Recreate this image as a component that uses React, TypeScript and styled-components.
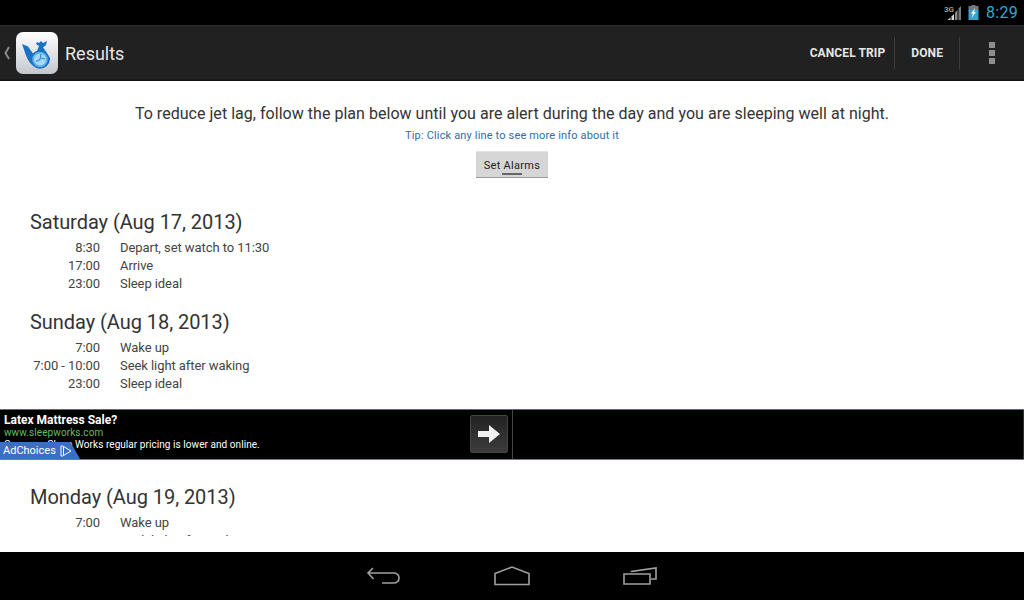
import React from "react";
import styled, { createGlobalStyle } from "styled-components";

const schedule = [
  {
    title: "Saturday (Aug 17, 2013)",
    rows: [
      ["8:30", "Depart, set watch to 11:30"],
      ["17:00", "Arrive"],
      ["23:00", "Sleep ideal"],
    ],
  },
  {
    title: "Sunday (Aug 18, 2013)",
    rows: [
      ["7:00", "Wake up"],
      ["7:00 - 10:00", "Seek light after waking"],
      ["23:00", "Sleep ideal"],
    ],
  },
];

const monday = [
  ["7:00", "Wake up"],
  ["7:00 - 10:00", "Seek light after waking"],
];

export default function App() {
  return (
    <>
      <GlobalStyle />
      <Screen>
        <StatusBar>
          <svg width="18" height="16" viewBox="0 0 18 16">
            <text x="0" y="7" fontSize="8" fontWeight="700" fill="#9a9a9a" fontFamily="Roboto, sans-serif">
              3G
            </text>
            <path d="M17 1v14h-2.500V3.500z" fill="#777" />
            <path d="M13.500 5v10H11V7.500z" fill="#8a8a8a" />
            <path d="M10 9v6H7.500v-3.500z" fill="#d8d8d8" />
            <path d="M6.500 12.500V15H3.500z" fill="#d8d8d8" />
          </svg>
          <svg width="11" height="15" viewBox="0 0 11 15">
            <rect x="3.500" y="0" width="4" height="2" fill="#777" />
            <rect x="0.500" y="1" width="10" height="5" fill="#777" />
            <rect x="0.500" y="5" width="10" height="10" fill="#33a5d5" />
            <path d="M7 3L3 8.500h2L3.500 13 8 7h-2z" fill="#fff" />
          </svg>
          <Clock>8:29</Clock>
        </StatusBar>

        <ActionBar>
          <UpCaret viewBox="0 0 6 14" width="6" height="14">
            <path d="M5 1L1.500 7 5 13" fill="none" stroke="#8a8a8a" strokeWidth="2" />
          </UpCaret>
          <AppIcon>
            <svg width="34" height="34" viewBox="0 0 34 34">
              <path
                d="M2 8l6 2.500 5 7 4-2.500 2-5-3-2 1-2 2 1 2-2 2 2 4-2-1 4-3 2.500 3 4 4 6.500c0 6-4 10-9 10-8 0-12-5-15-12.500z"
                fill="#1a72c4"
              />
              <circle cx="20" cy="23.500" r="8.500" fill="#5fb2e6" stroke="#1a72c4" strokeWidth="1.500" />
              <circle cx="20" cy="23.500" r="6" fill="#a9d8f2" />
              <path d="M21 18l-1 5.500-4 2M21 22l4 1" fill="none" stroke="#2f8fd8" strokeWidth="1.200" />
            </svg>
          </AppIcon>
          <BarTitle>Results</BarTitle>
          <BarActions>
            <BarAction>CANCEL TRIP</BarAction>
            <BarDivider />
            <BarAction $wide>DONE</BarAction>
            <BarDivider />
            <Overflow>
              <i />
              <i />
              <i />
            </Overflow>
          </BarActions>
        </ActionBar>

        <Content>
          <Scroller>
            <Intro>
              To reduce jet lag, follow the plan below until you are alert during the day and you
              are sleeping well at night.
            </Intro>
            <Tip>Tip: Click any line to see more info about it</Tip>
            <AlarmButton>Set Alarms</AlarmButton>

            <Days>
              {schedule.map((day) => (
                <Day key={day.title}>
                  <DayTitle>{day.title}</DayTitle>
                  {day.rows.map(([time, label]) => (
                    <Row key={time + label}>
                      <Time>{time}</Time>
                      <span>{label}</span>
                    </Row>
                  ))}
                </Day>
              ))}
            </Days>

            <AdBanner>
              <AdCell>
                <AdTitle>Latex Mattress Sale?</AdTitle>
                <AdUrl>www.sleepworks.com</AdUrl>
                <AdText>Compare Sleep Works regular pricing is lower and online.</AdText>
                <AdArrow>
                  <svg width="22" height="18" viewBox="0 0 22 18">
                    <path d="M0 6h11V0l11 9-11 9v-6H0z" fill="#f0f0f0" />
                  </svg>
                </AdArrow>
                <AdChoices>
                  AdChoices
                  <svg width="12" height="12" viewBox="0 0 12 12">
                    <path d="M3 1H1v10h2M3.500 1.500v9L11 6z" fill="none" stroke="#fff" strokeWidth="1" />
                  </svg>
                </AdChoices>
              </AdCell>
              <AdEmpty />
            </AdBanner>

            <Day $after>
              <DayTitle>Monday (Aug 19, 2013)</DayTitle>
              {monday.map(([time, label]) => (
                <Row key={time + label}>
                  <Time>{time}</Time>
                  <span>{label}</span>
                </Row>
              ))}
            </Day>
          </Scroller>
        </Content>

        <NavBar>
          <svg width="34" height="18" viewBox="0 0 34 18">
            <path
              d="M6 1L1 6l5.500 6M1 6h25c4 0 6 2 6 5s-2 5-6 5H15"
              fill="none"
              stroke="#a0a0a0"
              strokeWidth="1.600"
            />
          </svg>
          <svg width="36" height="20" viewBox="0 0 36 20">
            <path d="M1 7.500L18 1l17 6.500v11H1z" fill="none" stroke="#a0a0a0" strokeWidth="1.600" />
          </svg>
          <svg width="34" height="18" viewBox="0 0 34 18">
            <path d="M1 7h26v10H1z" fill="none" stroke="#a0a0a0" strokeWidth="1.600" />
            <path d="M8.500 5V4.500L33 1v11h-5" fill="none" stroke="#a0a0a0" strokeWidth="1.600" />
          </svg>
        </NavBar>
      </Screen>
    </>
  );
}

const GlobalStyle = createGlobalStyle`
  html, body {
    margin: 0;
    padding: 0;
    background: #000;
  }
  * {
    box-sizing: border-box;
  }
`;

const Screen = styled.div`
  width: 1024px;
  height: 600px;
  display: flex;
  flex-direction: column;
  overflow: hidden;
  background: #fff;
  font-family: Roboto, "Liberation Sans", sans-serif;
`;

const StatusBar = styled.div`
  height: 25px;
  flex: none;
  background: #000;
  display: flex;
  align-items: center;
  justify-content: flex-end;
  gap: 6px;
  padding-right: 6px;
`;

const Clock = styled.span`
  font-size: 16px;
  color: #33a5d5;
  margin-left: 1px;
  letter-spacing: 0.3px;
`;

const ActionBar = styled.div`
  height: 56px;
  flex: none;
  background: #212121;
  border-top: 1px solid #2c2c2c;
  border-bottom: 1px solid #111;
  box-shadow: inset 0 -1px 0 #1a1a1a;
  display: flex;
  align-items: center;
  padding-left: 4px;
`;

const UpCaret = styled.svg`
  flex: none;
`;

const AppIcon = styled.div`
  width: 42px;
  height: 42px;
  margin-left: 6px;
  border-radius: 7px;
  background: linear-gradient(#ffffff, #c4c8cd);
  display: flex;
  align-items: center;
  justify-content: center;
`;

const BarTitle = styled.div`
  margin-left: 7px;
  font-size: 18px;
  color: #e6e6e6;
`;

const BarActions = styled.div`
  margin-left: auto;
  display: flex;
  align-items: center;
`;

const BarAction = styled.div<{ $wide?: boolean }>`
  font-size: 12px;
  font-weight: 700;
  letter-spacing: 0.1px;
  color: #e6e6e6;
  padding: ${(p) => (p.$wide ? "0 16px" : "0 9px 0 8px")};
`;

const BarDivider = styled.div`
  width: 1px;
  height: 32px;
  background: #3d3d3d;
`;

const Overflow = styled.div`
  width: 64px;
  display: flex;
  flex-direction: column;
  align-items: center;
  gap: 2px;

  i {
    width: 6px;
    height: 6px;
    background: #8e8e8e;
  }
`;

const Content = styled.div`
  height: 471px;
  flex: none;
  padding-bottom: 16px;
  background: #fff;
`;

const Scroller = styled.div`
  height: 100%;
  overflow: hidden;
  padding-top: 23px;
`;

const Intro = styled.div`
  font-size: 16px;
  line-height: 20px;
  letter-spacing: 0.03px;
  color: #333;
  text-align: center;
`;

const Tip = styled.div`
  margin-top: 5px;
  font-size: 11px;
  line-height: 14px;
  letter-spacing: 0.16px;
  color: #2f6ca8;
  text-align: center;
`;

const AlarmButton = styled.div`
  width: 72px;
  height: 27px;
  margin: 8px auto 0;
  background: #d6d6d6;
  border-bottom: 1px solid #9a9a9a;
  border-top: 1px solid #e4e4e4;
  font-size: 11px;
  letter-spacing: 0.3px;
  color: #222;
  text-align: center;
  line-height: 27px;
  position: relative;

  &::after {
    content: "";
    position: absolute;
    left: 26px;
    bottom: 2px;
    width: 20px;
    height: 2px;
    background: #666;
  }
`;

const Days = styled.div`
  margin-top: 31px;
`;

const Day = styled.div<{ $after?: boolean }>`
  padding-left: 30px;
  margin-top: ${(p) => (p.$after ? "24px" : "0")};
  margin-bottom: ${(p) => (p.$after ? "0" : "16px")};
`;

const DayTitle = styled.div`
  font-size: 20px;
  line-height: 26px;
  letter-spacing: -0.05px;
  color: #333;
  margin-bottom: 4px;
`;

const Row = styled.div`
  display: flex;
  font-size: 13px;
  line-height: 18px;
  letter-spacing: -0.07px;
  color: #444;
`;

const Time = styled.span`
  width: 70px;
  margin-right: 20px;
  text-align: right;
  white-space: nowrap;
`;

const AdBanner = styled.div`
  height: 51px;
  margin-top: 1px;
  display: flex;
  background: #000;
  border-top: 1px solid #3f6fc9;
  border-bottom: 1px solid #4a7fd8;
`;

const AdCell = styled.div`
  width: 513px;
  position: relative;
  padding: 3px 0 0 4px;
  overflow: hidden;
  border-right: 1px solid #444;
`;

const AdEmpty = styled.div`
  flex: 1;
  border-right: 1px solid #333;
`;

const AdTitle = styled.div`
  font-size: 12px;
  line-height: 14px;
  font-weight: 700;
  color: #fff;
`;

const AdUrl = styled.div`
  font-size: 10px;
  line-height: 12px;
  letter-spacing: 0.1px;
  color: #5fbf5f;
`;

const AdText = styled.div`
  font-size: 10px;
  line-height: 12px;
  letter-spacing: 0.06px;
  color: #fff;
`;

const AdArrow = styled.div`
  position: absolute;
  left: 470px;
  top: 5px;
  width: 38px;
  height: 38px;
  border-radius: 2px;
  border: 1px solid #444;
  background: linear-gradient(#222, #3c3c3c);
  display: flex;
  align-items: center;
  justify-content: center;
`;

const AdChoices = styled.div`
  position: absolute;
  left: 0;
  bottom: 0;
  height: 17px;
  width: 80px;
  padding-left: 3px;
  display: flex;
  align-items: center;
  gap: 4px;
  font-size: 11px;
  color: #fff;
  background: #3a6fc8;
  border-top-right-radius: 6px;
  clip-path: polygon(0 0, 88% 0, 100% 100%, 0 100%);
`;

const NavBar = styled.div`
  height: 48px;
  flex: none;
  background: #000;
  display: flex;
  align-items: center;
  justify-content: center;
  gap: 93px;
`;
